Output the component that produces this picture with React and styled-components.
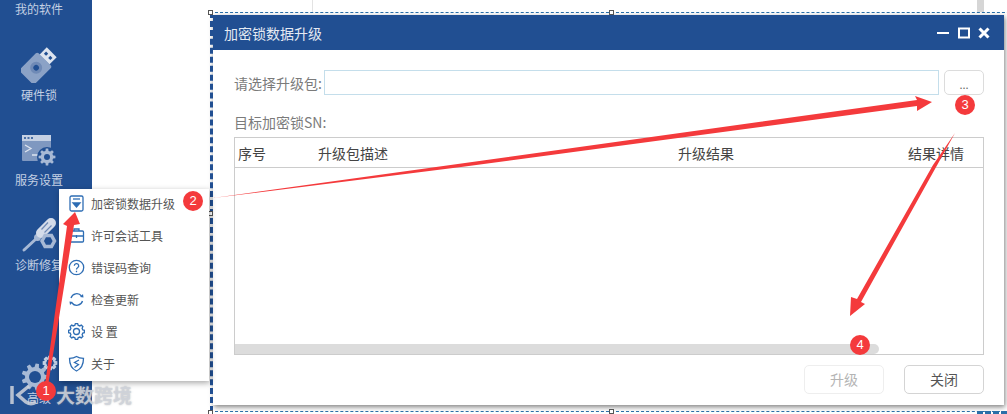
import React from 'react';
import styled, { createGlobalStyle } from 'styled-components';

const GlobalStyle = createGlobalStyle`
  html, body {
    margin: 0;
    padding: 0;
    background: #fff;
    font-family: "Noto Sans CJK SC", "Liberation Sans", sans-serif;
  }
`;

const Page = styled.div`
  position: relative;
  display: flex;
  width: 1007px;
  height: 414px;
  overflow: hidden;
  background: #fff;
`;

const Sidebar = styled.div`
  display: flex;
  flex-direction: column;
  align-items: center;
  width: 78px;
  padding-right: 14px;
  flex-shrink: 0;
  background: #214f92;
  color: #c3d0e3;
  font-size: 12px;
`;

const TopLabel = styled.div`
  height: 20px;
  line-height: 18px;
`;

const NavItem = styled.div`
  display: flex;
  flex-direction: column;
  align-items: center;
  gap: ${(props) => (props.$last ? '0' : '3px')};
  height: ${(props) => (props.$last ? 'auto' : '85px')};
  width: 100%;
  box-sizing: border-box;
  padding-top: ${(props) => (props.$last ? '0' : '27px')};
  margin-top: ${(props) => (props.$last ? 'auto' : '0')};
  margin-bottom: ${(props) => (props.$last ? '7px' : '0')};
`;

const NavLabel = styled.div`
  margin-top: ${(props) => (props.$tight ? '-3px' : '0')};
  line-height: 18px;
  white-space: nowrap;
`;

const Stage = styled.div`
  flex: 1;
  padding: 15px 0 0 121px;
`;

const Dialog = styled.div`
  display: flex;
  flex-direction: column;
  width: 791px;
  height: 390px;
  background: #fff;
  box-shadow: 1px 2px 5px rgba(0, 0, 0, 0.5);
`;

const TitleBar = styled.div`
  display: flex;
  align-items: center;
  justify-content: space-between;
  height: 35px;
  padding: 0 14px 0 11px;
  background: #214f92;
  color: #e4eaf3;
  font-size: 14px;
`;

const WindowButtons = styled.div`
  display: flex;
  align-items: center;
  gap: 8px;
`;

const Body = styled.div`
  display: flex;
  flex-direction: column;
  flex: 1;
  padding: 20px 20px 11px 21px;
`;

const PickRow = styled.div`
  display: flex;
  align-items: stretch;
  height: 25px;
`;

const FieldLabel = styled.div`
  width: 90px;
  line-height: 27px;
  color: #7b7b7b;
  font-size: 14px;
  white-space: nowrap;
`;

const PathInput = styled.div`
  flex: 1;
  box-sizing: border-box;
  border: 1px solid #c4deeb;
`;

const BrowseButton = styled.div`
  box-sizing: border-box;
  width: 40px;
  margin-left: 5px;
  border: 1px solid #dcdcdc;
  border-radius: 5px;
  color: #666;
  font-size: 11px;
  line-height: 26px;
  text-align: center;
`;

const SnLabel = styled(FieldLabel)`
  margin-top: 18px;
  margin-bottom: 5px;
  height: 19px;
  line-height: 18px;
`;

const Table = styled.div`
  position: relative;
  flex: 1;
  box-sizing: border-box;
  border: 1px solid #ccc;
`;

const HeadRow = styled.div`
  display: grid;
  grid-template-columns: 80px 360px 230px 1fr;
  height: 29px;
  padding-left: 3px;
  border-bottom: 1px solid #ccc;
  color: #444;
  font-size: 14px;
  line-height: 30px;
`;

const ScrollThumb = styled.div`
  position: absolute;
  left: 0;
  bottom: 0;
  width: 644px;
  height: 10px;
  border-radius: 0 5px 5px 0;
  background: #dcdcdc;
`;

const Footer = styled.div`
  display: flex;
  justify-content: flex-end;
  gap: 20px;
  margin-top: 10px;
`;

const FootButton = styled.div`
  box-sizing: border-box;
  width: 80px;
  height: 29px;
  border: 1px solid ${(props) => (props.$disabled ? '#eeeeee' : '#d4d4d4')};
  border-radius: 5px;
  color: ${(props) => (props.$disabled ? '#b4b4b4' : '#555')};
  font-size: 14px;
  line-height: 27px;
  text-align: center;
`;

const Menu = styled.div`
  position: absolute;
  left: 59px;
  top: 189px;
  width: 150px;
  background: #fff;
  box-shadow: 1px 2px 6px rgba(0, 0, 0, 0.35);
`;

const MenuItem = styled.div`
  display: flex;
  align-items: center;
  gap: 6px;
  box-sizing: border-box;
  height: 32px;
  padding: 0 0 3px 9px;
  color: #555;
  font-size: 12px;
`;

const MenuIcon = styled.svg`
  width: 17px;
  height: 17px;
  flex-shrink: 0;
  fill: none;
  stroke: #2e6db4;
  stroke-width: 1.3;
`;

const Selection = styled.div`
  position: absolute;
  left: 210px;
  top: 12px;
  width: 820px;
  height: 400px;
  box-sizing: border-box;
  border: 1px dashed #2a6fa8;
  border-left: 3px dashed #214f92;
  pointer-events: none;
`;

const Handle = styled.div`
  position: absolute;
  width: 5px;
  height: 5px;
  box-sizing: border-box;
  border: 1px solid #555;
  background: #fff;
  left: ${(props) => props.$x}px;
  top: ${(props) => props.$y}px;
`;

const TopStub = styled.div`
  position: absolute;
  top: 0;
  left: ${(props) => props.$x}px;
  width: ${(props) => props.$w}px;
  height: 12px;
  background: ${(props) => props.$color};
`;

const CornerDash = styled.div`
  position: absolute;
  left: 977px;
  top: 411px;
  width: 30px;
  height: 0;
  border-top: 3px dashed #2a6fa8;
`;

const Marks = styled.svg`
  position: absolute;
  left: 0;
  top: 0;
  width: 1007px;
  height: 414px;
  pointer-events: none;
`;

const Badge = styled.div`
  position: absolute;
  left: ${(props) => props.$x - 10}px;
  top: ${(props) => props.$y - 10}px;
  width: 20px;
  height: 20px;
  border-radius: 50%;
  background: #f43a3c;
  color: #fff;
  font-family: "Liberation Sans", sans-serif;
  font-size: 13px;
  line-height: 20px;
  text-align: center;
`;

const Watermark = styled.div`
  position: absolute;
  left: 56px;
  top: 382px;
  color: rgba(208, 212, 220, 0.85);
  font-size: 19px;
  font-weight: 700;
  line-height: 26px;
  text-shadow: 0 0 2px rgba(150, 150, 150, 0.6);
`;

const WatermarkLogo = styled.svg`
  position: absolute;
  left: 9px;
  top: 384px;
  width: 46px;
  height: 22px;
  fill: none;
  stroke: rgba(208, 212, 220, 0.85);
  stroke-width: 3.5;
`;

// toothed wheel, used by the sidebar and the settings entry
const gearPath = (cx, cy, outer, inner, teeth) => {
  const points = [];
  const step = (Math.PI * 2) / teeth;
  for (let i = 0; i < teeth; i++) {
    const a = i * step;
    [
      [-0.32, inner],
      [-0.18, outer],
      [0.18, outer],
      [0.32, inner],
    ].forEach(([k, r]) => {
      const t = a + k * step;
      points.push(`${(cx + Math.cos(t) * r).toFixed(2)} ${(cy + Math.sin(t) * r).toFixed(2)}`);
    });
  }
  return `M${points.join('L')}Z`;
};

const ICON = '#a7b9d5';
const RED = '#f43a3c';

const UsbIcon = () => (
  <svg width="36" height="36" viewBox="0 0 36 36">
    <g transform="rotate(-45 18 18)">
      <rect x="0" y="7.500" width="26" height="21" rx="2" fill="#8ba2c6" />
      <rect x="26" y="11" width="10" height="14" fill="#dde4ef" />
      <rect x="29.500" y="13.500" width="3" height="3" fill="#214f92" />
      <rect x="29.500" y="19.500" width="3" height="3" fill="#214f92" />
      <circle cx="14" cy="18" r="6" fill="#6f8ab6" />
      <circle cx="14" cy="18" r="2.800" fill="#214f92" />
    </g>
  </svg>
);

const ServiceIcon = () => (
  <svg width="36" height="36" viewBox="0 0 36 36">
    <rect x="1" y="3" width="29" height="26" rx="1" fill="#7f98c0" />
    <rect x="1" y="3" width="29" height="6" fill="#c4d0e3" />
    <path d="M3 6h2M6.500 6h2M10 6h2" stroke="#214f92" strokeWidth="1.500" />
    <path d="M4 13l6 3.500-6 3.500M11 23h6" fill="none" stroke="#dde4ef" strokeWidth="1.300" />
    <circle cx="26" cy="25" r="10" fill="#214f92" />
    <path d={gearPath(26, 25, 8.500, 6.300, 8)} fill={ICON} />
    <circle cx="26" cy="25" r="3" fill="#214f92" />
  </svg>
);

const RepairIcon = () => (
  <svg width="36" height="36" viewBox="0 0 36 36">
    <path d="M3 33L16 21" stroke={ICON} strokeWidth="3" strokeLinecap="round" />
    <circle cx="16.500" cy="20.500" r="3.500" fill={ICON} />
    <path d="M20 16L30 6" stroke="#d4dcea" strokeWidth="10" strokeLinecap="round" />
    <path d="M20.500 12.500L27 5.500M23.500 15.500L30.500 8.500" stroke="#6f8ab6" strokeWidth="1.200" />
    <path d="M21 24l3-5.500h6.500l3 5.500-3 5.500H24z" fill="none" stroke={ICON} strokeWidth="3.500" />
  </svg>
);

const AdvancedIcon = () => (
  <svg width="38" height="37" viewBox="0 0 38 37">
    <path d={gearPath(15, 22, 13.500, 10, 9)} fill={ICON} />
    <circle cx="15" cy="22" r="6" fill="#214f92" />
    <path d={gearPath(30, 8, 6.300, 4.800, 8)} fill="none" stroke="#c3d0e3" strokeWidth="2.200" />
  </svg>
);

const MinimizeGlyph = () => (
  <svg width="13" height="12" viewBox="0 0 13 12">
    <path d="M0 6h12" stroke="#fff" strokeWidth="2" />
  </svg>
);

const MaximizeGlyph = () => (
  <svg width="12" height="12" viewBox="0 0 12 12">
    <rect x="1" y="1.500" width="10" height="9" fill="none" stroke="#fff" strokeWidth="2" />
  </svg>
);

const CloseGlyph = () => (
  <svg width="12" height="12" viewBox="0 0 12 12">
    <path d="M1.500 1.500l9 9M10.500 1.500l-9 9" stroke="#fff" strokeWidth="3" />
  </svg>
);

const menuEntries = [
  {
    label: '加密锁数据升级',
    icon: (
      <>
        <rect x="2" y="1" width="13" height="15" rx="1.500" />
        <path d="M5 4h7" />
        <path d="M5 8h7l-3.500 4z" fill="#2e6db4" />
      </>
    ),
  },
  {
    label: '许可会话工具',
    icon: (
      <>
        <rect x="1.500" y="4" width="14" height="11" rx="1" />
        <path d="M6 4V2h5v2M1.500 9h14M8.500 8v3" />
      </>
    ),
  },
  {
    label: '错误码查询',
    icon: (
      <>
        <circle cx="8.500" cy="8.500" r="7.200" />
        <path d="M6.300 6.800a2.200 2.200 0 1 1 3.300 1.900c-.8.500-1.100.9-1.100 1.800M8.500 11.800v1.400" />
      </>
    ),
  },
  {
    label: '检查更新',
    icon: (
      <>
        <path d="M3 7a6 6 0 0 1 10.500-2M14.500 10a6 6 0 0 1-10.500 2" />
        <path d="M12 6l3.500.5L15 3zM5 11l-3.500-.5L2 14z" fill="#2e6db4" stroke="none" />
      </>
    ),
  },
  {
    label: '设 置',
    icon: (
      <>
        <path d={gearPath(8.500, 8.500, 8, 6.500, 8)} />
        <circle cx="8.500" cy="8.500" r="3" />
      </>
    ),
  },
  {
    label: '关于',
    icon: (
      <>
        <path d="M8.500 1.500c2 1.300 4.500 1.800 7 1.800 0 6-2 10.500-7 12.700-5-2.200-7-6.700-7-12.700 2.500 0 5-.5 7-1.800z" />
        <path d="M11 5L6.500 7.500l4 2L6.500 12.500" />
      </>
    ),
  },
];

const App = () => (
  <>
    <GlobalStyle />
    <Page>
      <Sidebar>
        <TopLabel>我的软件</TopLabel>
        <NavItem>
          <UsbIcon />
          <NavLabel>硬件锁</NavLabel>
        </NavItem>
        <NavItem>
          <ServiceIcon />
          <NavLabel>服务设置</NavLabel>
        </NavItem>
        <NavItem>
          <RepairIcon />
          <NavLabel>诊断修复</NavLabel>
        </NavItem>
        <NavItem $last>
          <AdvancedIcon />
          <NavLabel $tight>高级</NavLabel>
        </NavItem>
      </Sidebar>
      <Stage>
        <Dialog>
          <TitleBar>
            加密锁数据升级
            <WindowButtons>
              <MinimizeGlyph />
              <MaximizeGlyph />
              <CloseGlyph />
            </WindowButtons>
          </TitleBar>
          <Body>
            <PickRow>
              <FieldLabel>请选择升级包:</FieldLabel>
              <PathInput />
              <BrowseButton>...</BrowseButton>
            </PickRow>
            <SnLabel>目标加密锁SN:</SnLabel>
            <Table>
              <HeadRow>
                <span>序号</span>
                <span>升级包描述</span>
                <span>升级结果</span>
                <span>结果详情</span>
              </HeadRow>
              <ScrollThumb />
            </Table>
            <Footer>
              <FootButton $disabled>升级</FootButton>
              <FootButton>关闭</FootButton>
            </Footer>
          </Body>
        </Dialog>
      </Stage>

      <TopStub $x={312} $w={1} $color="#e3e3e3" />
      <TopStub $x={977} $w={7} $color="#d6d6d6" />
      <Selection />
      <CornerDash />
      <Handle $x={208} $y={10} />
      <Handle $x={208} $y={211} />
      <Handle $x={208} $y={410} />
      <Handle $x={609} $y={10} />
      <Handle $x={609} $y={409} />

      <Menu>
        {menuEntries.map((entry) => (
          <MenuItem key={entry.label}>
            <MenuIcon viewBox="0 0 17 17">{entry.icon}</MenuIcon>
            {entry.label}
          </MenuItem>
        ))}
      </Menu>

      <Marks viewBox="0 0 1007 414">
        <polygon points="44,392 67,226 63,224 75,212 80,224 74,225 47,392" fill={RED} />
        <polygon points="213,198 917,100 915,96 932,102 917,111 917,106 465,166.500" fill={RED} />
        <polygon points="955,133 861,302 865,304 850,316 851,297 857,299 933,165" fill={RED} />
      </Marks>
      <Badge $x={46} $y={391}>1</Badge>
      <Badge $x={193} $y={201}>2</Badge>
      <Badge $x={965} $y={105}>3</Badge>
      <Badge $x={860} $y={345}>4</Badge>

      <WatermarkLogo viewBox="0 0 46 22">
        <path d="M3 2v18M20 2L9 11l8 7c3 2 7 2 10 0" />
      </WatermarkLogo>
      <Watermark>大数跨境</Watermark>
    </Page>
  </>
);

export default App;
